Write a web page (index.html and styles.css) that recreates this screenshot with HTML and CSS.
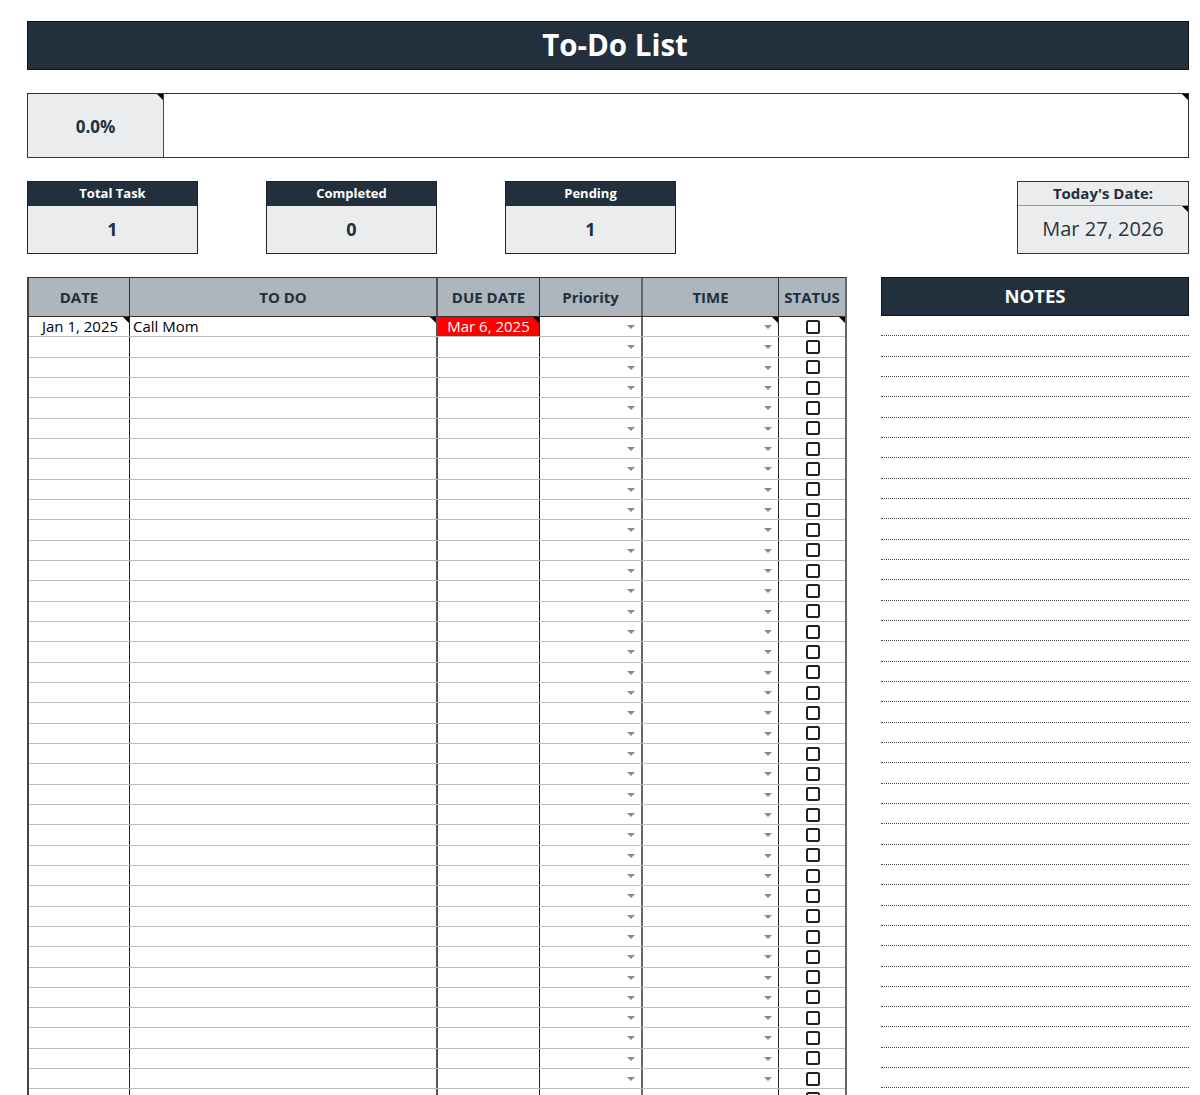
FILE: index.html
```html
<!DOCTYPE html>
<html>
<head>
<meta charset="utf-8">
<link rel="stylesheet" href="styles.css">
</head>
<body>
<div class="page">
  <div class="title">To-Do List</div>

  <div class="progress">
    <div class="pct corner">0.0%</div>
    <div class="bar corner"></div>
  </div>

  <div class="stats">
    <div class="stat"><div class="stat-h">Total Task</div><div class="stat-v">1</div></div>
    <div class="stat"><div class="stat-h">Completed</div><div class="stat-v">0</div></div>
    <div class="stat"><div class="stat-h">Pending</div><div class="stat-v">1</div></div>
    <div class="spacer"></div>
    <div class="today"><div class="today-h">Today's Date:</div><div class="today-v corner">Mar 27, 2026</div></div>
  </div>

  <div class="main">
    <div class="table">
      <div class="row head">
        <div class="c">DATE</div><div class="c">TO DO</div><div class="c">DUE DATE</div><div class="c">Priority</div><div class="c">TIME</div><div class="c">STATUS</div>
      </div>
      <div class="row"><div class="c date corner">Jan 1, 2025</div><div class="c todo corner">Call Mom</div><div class="c due overdue corner">Mar 6, 2025</div><div class="c dd"></div><div class="c dd corner"></div><div class="c st corner"><span class="cb"></span></div></div>
      <div class="row"><div class="c"></div><div class="c"></div><div class="c"></div><div class="c dd"></div><div class="c dd"></div><div class="c st"><span class="cb"></span></div></div>
      <div class="row"><div class="c"></div><div class="c"></div><div class="c"></div><div class="c dd"></div><div class="c dd"></div><div class="c st"><span class="cb"></span></div></div>
      <div class="row"><div class="c"></div><div class="c"></div><div class="c"></div><div class="c dd"></div><div class="c dd"></div><div class="c st"><span class="cb"></span></div></div>
      <div class="row"><div class="c"></div><div class="c"></div><div class="c"></div><div class="c dd"></div><div class="c dd"></div><div class="c st"><span class="cb"></span></div></div>
      <div class="row"><div class="c"></div><div class="c"></div><div class="c"></div><div class="c dd"></div><div class="c dd"></div><div class="c st"><span class="cb"></span></div></div>
      <div class="row"><div class="c"></div><div class="c"></div><div class="c"></div><div class="c dd"></div><div class="c dd"></div><div class="c st"><span class="cb"></span></div></div>
      <div class="row"><div class="c"></div><div class="c"></div><div class="c"></div><div class="c dd"></div><div class="c dd"></div><div class="c st"><span class="cb"></span></div></div>
      <div class="row"><div class="c"></div><div class="c"></div><div class="c"></div><div class="c dd"></div><div class="c dd"></div><div class="c st"><span class="cb"></span></div></div>
      <div class="row"><div class="c"></div><div class="c"></div><div class="c"></div><div class="c dd"></div><div class="c dd"></div><div class="c st"><span class="cb"></span></div></div>
      <div class="row"><div class="c"></div><div class="c"></div><div class="c"></div><div class="c dd"></div><div class="c dd"></div><div class="c st"><span class="cb"></span></div></div>
      <div class="row"><div class="c"></div><div class="c"></div><div class="c"></div><div class="c dd"></div><div class="c dd"></div><div class="c st"><span class="cb"></span></div></div>
      <div class="row"><div class="c"></div><div class="c"></div><div class="c"></div><div class="c dd"></div><div class="c dd"></div><div class="c st"><span class="cb"></span></div></div>
      <div class="row"><div class="c"></div><div class="c"></div><div class="c"></div><div class="c dd"></div><div class="c dd"></div><div class="c st"><span class="cb"></span></div></div>
      <div class="row"><div class="c"></div><div class="c"></div><div class="c"></div><div class="c dd"></div><div class="c dd"></div><div class="c st"><span class="cb"></span></div></div>
      <div class="row"><div class="c"></div><div class="c"></div><div class="c"></div><div class="c dd"></div><div class="c dd"></div><div class="c st"><span class="cb"></span></div></div>
      <div class="row"><div class="c"></div><div class="c"></div><div class="c"></div><div class="c dd"></div><div class="c dd"></div><div class="c st"><span class="cb"></span></div></div>
      <div class="row"><div class="c"></div><div class="c"></div><div class="c"></div><div class="c dd"></div><div class="c dd"></div><div class="c st"><span class="cb"></span></div></div>
      <div class="row"><div class="c"></div><div class="c"></div><div class="c"></div><div class="c dd"></div><div class="c dd"></div><div class="c st"><span class="cb"></span></div></div>
      <div class="row"><div class="c"></div><div class="c"></div><div class="c"></div><div class="c dd"></div><div class="c dd"></div><div class="c st"><span class="cb"></span></div></div>
      <div class="row"><div class="c"></div><div class="c"></div><div class="c"></div><div class="c dd"></div><div class="c dd"></div><div class="c st"><span class="cb"></span></div></div>
      <div class="row"><div class="c"></div><div class="c"></div><div class="c"></div><div class="c dd"></div><div class="c dd"></div><div class="c st"><span class="cb"></span></div></div>
      <div class="row"><div class="c"></div><div class="c"></div><div class="c"></div><div class="c dd"></div><div class="c dd"></div><div class="c st"><span class="cb"></span></div></div>
      <div class="row"><div class="c"></div><div class="c"></div><div class="c"></div><div class="c dd"></div><div class="c dd"></div><div class="c st"><span class="cb"></span></div></div>
      <div class="row"><div class="c"></div><div class="c"></div><div class="c"></div><div class="c dd"></div><div class="c dd"></div><div class="c st"><span class="cb"></span></div></div>
      <div class="row"><div class="c"></div><div class="c"></div><div class="c"></div><div class="c dd"></div><div class="c dd"></div><div class="c st"><span class="cb"></span></div></div>
      <div class="row"><div class="c"></div><div class="c"></div><div class="c"></div><div class="c dd"></div><div class="c dd"></div><div class="c st"><span class="cb"></span></div></div>
      <div class="row"><div class="c"></div><div class="c"></div><div class="c"></div><div class="c dd"></div><div class="c dd"></div><div class="c st"><span class="cb"></span></div></div>
      <div class="row"><div class="c"></div><div class="c"></div><div class="c"></div><div class="c dd"></div><div class="c dd"></div><div class="c st"><span class="cb"></span></div></div>
      <div class="row"><div class="c"></div><div class="c"></div><div class="c"></div><div class="c dd"></div><div class="c dd"></div><div class="c st"><span class="cb"></span></div></div>
      <div class="row"><div class="c"></div><div class="c"></div><div class="c"></div><div class="c dd"></div><div class="c dd"></div><div class="c st"><span class="cb"></span></div></div>
      <div class="row"><div class="c"></div><div class="c"></div><div class="c"></div><div class="c dd"></div><div class="c dd"></div><div class="c st"><span class="cb"></span></div></div>
      <div class="row"><div class="c"></div><div class="c"></div><div class="c"></div><div class="c dd"></div><div class="c dd"></div><div class="c st"><span class="cb"></span></div></div>
      <div class="row"><div class="c"></div><div class="c"></div><div class="c"></div><div class="c dd"></div><div class="c dd"></div><div class="c st"><span class="cb"></span></div></div>
      <div class="row"><div class="c"></div><div class="c"></div><div class="c"></div><div class="c dd"></div><div class="c dd"></div><div class="c st"><span class="cb"></span></div></div>
      <div class="row"><div class="c"></div><div class="c"></div><div class="c"></div><div class="c dd"></div><div class="c dd"></div><div class="c st"><span class="cb"></span></div></div>
      <div class="row"><div class="c"></div><div class="c"></div><div class="c"></div><div class="c dd"></div><div class="c dd"></div><div class="c st"><span class="cb"></span></div></div>
      <div class="row"><div class="c"></div><div class="c"></div><div class="c"></div><div class="c dd"></div><div class="c dd"></div><div class="c st"><span class="cb"></span></div></div>
      <div class="row"><div class="c"></div><div class="c"></div><div class="c"></div><div class="c dd"></div><div class="c dd"></div><div class="c st"><span class="cb"></span></div></div>
    </div>

    <div class="notes">
      <div class="notes-h">NOTES</div>
      <div class="line"></div><div class="line"></div><div class="line"></div><div class="line"></div><div class="line"></div>
      <div class="line"></div><div class="line"></div><div class="line"></div><div class="line"></div><div class="line"></div>
      <div class="line"></div><div class="line"></div><div class="line"></div><div class="line"></div><div class="line"></div>
      <div class="line"></div><div class="line"></div><div class="line"></div><div class="line"></div><div class="line"></div>
      <div class="line"></div><div class="line"></div><div class="line"></div><div class="line"></div><div class="line"></div>
      <div class="line"></div><div class="line"></div><div class="line"></div><div class="line"></div><div class="line"></div>
      <div class="line"></div><div class="line"></div><div class="line"></div><div class="line"></div><div class="line"></div>
      <div class="line"></div><div class="line"></div><div class="line"></div><div class="line"></div>
    </div>
  </div>
</div>
</body>
</html>
```

FILE: styles.css
```css
* { box-sizing: border-box; }
html, body { margin: 0; padding: 0; background: #fff; }
body {
  font-family: "Open Sans", "Noto Sans", "Liberation Sans", sans-serif;
  color: #222f3d;
}
.page {
  width: 1162px;
  margin-left: 27px;
  padding-top: 21px;
}

.corner { position: relative; }
.corner::after {
  content: "";
  position: absolute;
  top: 0;
  right: 0;
  width: 0;
  height: 0;
  border-style: solid;
  border-width: 0 6px 6px 0;
  border-color: transparent #000 transparent transparent;
}

/* title */
.title {
  height: 49px;
  background: #222f3d;
  border: 1px solid #111;
  color: #fff;
  font-weight: 700;
  font-size: 29.5px;
  line-height: 45px;
  text-align: center;
  padding-left: 14px;
}

/* progress */
.progress {
  margin-top: 23px;
  height: 65px;
  border: 1px solid #333;
  display: flex;
}
.pct {
  width: 136px;
  background: #ebecee;
  border-right: 1px solid #444;
  font-weight: 700;
  font-size: 17px;
  display: flex;
  align-items: center;
  justify-content: center;
  padding-top: 1px;
}
.bar { flex: 1; }

/* stats */
.stats {
  margin-top: 23px;
  display: flex;
  gap: 68px;
  height: 73px;
}
.stat {
  width: 171px;
  border: 1px solid #222;
  display: flex;
  flex-direction: column;
}
.stat-h {
  height: 24px;
  background: #222f3d;
  color: #fff;
  font-weight: 700;
  font-size: 13px;
  line-height: 23px;
  text-align: center;
}
.stat-v {
  flex: 1;
  background: #ebecee;
  font-weight: 700;
  font-size: 18px;
  display: flex;
  align-items: center;
  justify-content: center;
  padding-bottom: 2px;
}
.spacer { flex: 1; margin-left: -68px; }
.today {
  width: 172px;
  border: 1px solid #333;
  display: flex;
  flex-direction: column;
  background: #ebecee;
}
.today-h {
  height: 24px;
  border-bottom: 1px solid #999;
  font-weight: 700;
  font-size: 15px;
  line-height: 22px;
  text-align: center;
}
.today-v {
  flex: 1;
  font-size: 20px;
  color: #2b3440;
  display: flex;
  align-items: center;
  justify-content: center;
  padding-bottom: 2px;
}

/* main */
.main {
  margin-top: 23px;
  display: flex;
  gap: 34px;
  align-items: flex-start;
}
.table {
  width: 820px;
  border-left: 2px solid #444;
  border-right: 2px solid #666;
  border-top: 1px solid #333;
}
.row {
  display: grid;
  grid-template-columns: 101px 308px 102px 103px 136px 66px;
  height: 20.33px;
  border-bottom: 1px solid #bcbcbc;
}
.c {
  border-right: 1px solid #222;
  font-size: 15px;
  line-height: 19px;
  color: #000;
  white-space: nowrap;
  overflow: visible;
}
.c:nth-child(2) { border-right: 2px solid #555; }
.c:nth-child(4) { border-right: 2px solid #666; }
.c:nth-child(6) { border-right: 0; }

.row.head {
  height: 39px;
  background: #adb5bd;
  border-bottom: 1px solid #333;
}
.row.head .c {
  font-weight: 700;
  font-size: 15px;
  line-height: 38px;
  text-align: center;
  color: #222f3d;
  border-right-color: #333;
}
.row.head .c:nth-child(2) { border-right: 2px solid #555; }
.row.head .c:nth-child(4) { border-right: 2px solid #666; }

.date { text-align: center; padding-left: 2px; }
.todo { padding-left: 3px; }
.due { text-align: center; }
.overdue { background: #ff0000; color: #fff; }

.dd { position: relative; }
.dd::before {
  content: "";
  position: absolute;
  right: 6px;
  top: 8px;
  width: 0;
  height: 0;
  border-left: 4px solid transparent;
  border-right: 4px solid transparent;
  border-top: 4px solid #8a8a8a;
}
.st {
  display: flex;
  align-items: center;
  justify-content: center;
}
.cb {
  display: block;
  width: 14px;
  height: 14px;
  border: 2px solid #222;
  border-radius: 2.5px;
  margin-left: 1px;
}

/* notes */
.notes { width: 308px; }
.notes-h {
  height: 39px;
  background: #222f3d;
  border: 1px solid #111;
  color: #fff;
  font-weight: 700;
  font-size: 18.5px;
  line-height: 36px;
  text-align: center;
}
.line {
  height: 20.33px;
  border-bottom: 1px dotted #444;
}
```
